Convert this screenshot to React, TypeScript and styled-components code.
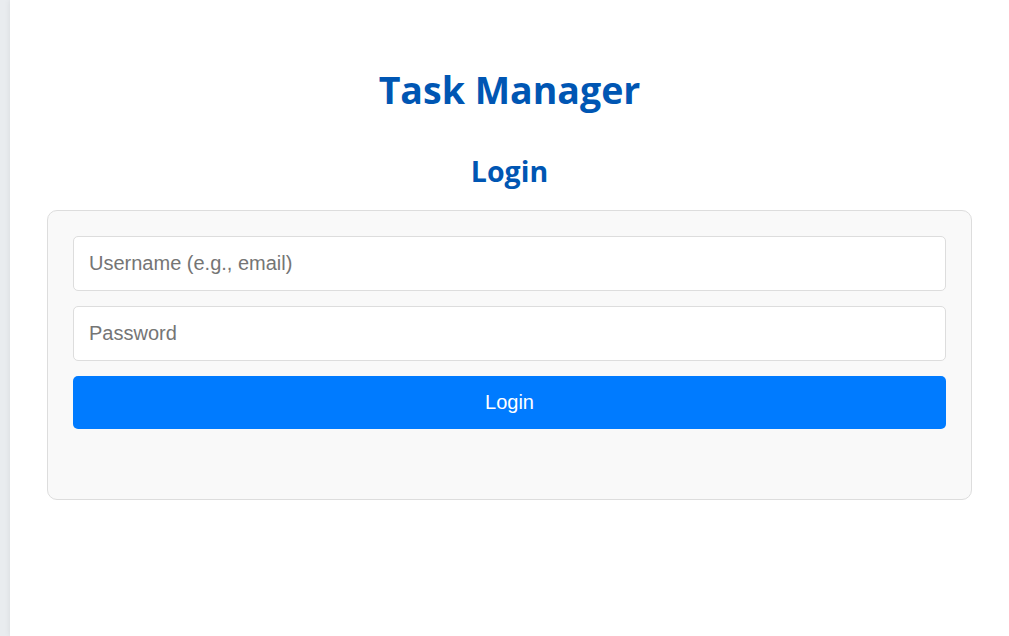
import React from "react";
import styled, { createGlobalStyle } from "styled-components";

const Global = createGlobalStyle`
  html, body { margin: 0; padding: 0; }
  body {
    background: #e9ecef;
    font-family: "Segoe UI", "Open Sans", "Noto Sans", sans-serif;
    height: 636px;
    overflow: hidden;
  }
`;

const Container = styled.div`
  margin-left: 10px;
  min-height: 636px;
  background: #ffffff;
  box-shadow: 0 0 6px rgba(0, 0, 0, 0.08);
  padding: 60px 37px 0;
  box-sizing: border-box;
`;

const Title = styled.h1`
  margin: 0;
  text-align: center;
  color: #0056b3;
  font-size: 37.5px;
  font-weight: 700;
  line-height: 60px;
`;

const SubTitle = styled.h2`
  margin: 31px 0 19px;
  text-align: center;
  color: #0056b3;
  font-size: 28.5px;
  font-weight: 700;
  line-height: 40px;
`;

const Card = styled.form`
  background: #f9f9f9;
  border: 1px solid #ddd;
  border-radius: 10px;
  padding: 25px 25px 70px;
  display: flex;
  flex-direction: column;
  gap: 15px;
`;

const Input = styled.input`
  height: 55px;
  box-sizing: border-box;
  border: 1px solid #ddd;
  border-radius: 5px;
  background: #fff;
  padding: 0 15px;
  font-family: "Liberation Sans", Arial, sans-serif;
  font-size: 20px;
  color: #333;
  outline: none;
  &::placeholder { color: #757575; }
`;

const Button = styled.button`
  height: 53px;
  border: none;
  border-radius: 5px;
  background: #007bff;
  color: #fff;
  font-family: "Liberation Sans", Arial, sans-serif;
  font-size: 20px;
  cursor: pointer;
`;

export default function App() {
  return (
    <>
      <Global />
      <Container>
        <Title>Task Manager</Title>
        <SubTitle>Login</SubTitle>
        <Card onSubmit={(e) => e.preventDefault()}>
          <Input type="text" placeholder="Username (e.g., email)" />
          <Input type="password" placeholder="Password" />
          <Button type="submit">Login</Button>
        </Card>
      </Container>
    </>
  );
}
